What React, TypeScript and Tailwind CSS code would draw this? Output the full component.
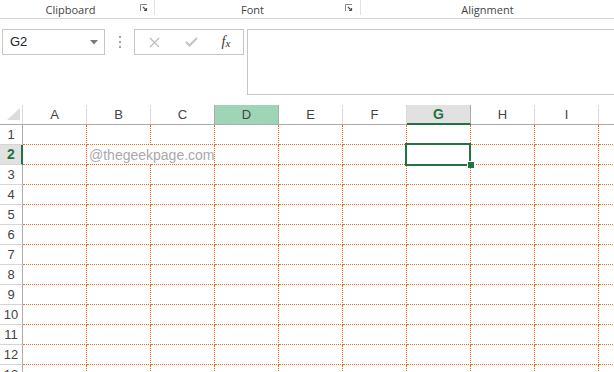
import React from "react";

const cols = ["A", "B", "C", "D", "E", "F", "G", "H", "I", "J"];
const rows = [1, 2, 3, 4, 5, 6, 7, 8, 9, 10, 11, 12, 13];

const Launcher = () => (
  <svg width="8" height="8" viewBox="0 0 8 8" className="shrink-0 mt-[4px]">
    <path d="M0.5 7V0.5H7" fill="none" stroke="#8a8a8a" strokeWidth="1" />
    <path d="M3 3L6.5 6.5M6.5 4V6.5H4" fill="none" stroke="#555" strokeWidth="1.2" />
  </svg>
);

export default function App() {
  return (
    <div className="w-[614px] h-[372px] overflow-hidden bg-white relative font-['Open_Sans',sans-serif]">
      {/* ribbon group labels */}
      <div className="flex h-[19px] border-b border-[#d5d5d5] text-[11px] text-[#444] leading-[20px]">
        <div className="w-[155px] flex items-start border-r border-[#e1e1e1] pr-[6px] h-[15px]">
          <span className="flex-1 text-center pl-[1px]">Clipboard</span>
          <Launcher />
        </div>
        <div className="w-[206px] flex items-start border-r border-[#e1e1e1] pr-[7px] h-[15px]">
          <span className="flex-1 text-center pl-[5px]">Font</span>
          <Launcher />
        </div>
        <div className="flex-1 text-center h-[15px]">Alignment</div>
      </div>

      {/* name box + formula bar */}
      <div className="flex h-[86px] pt-[10px] items-start">
        <div className="ml-[2px] w-[103px] h-[26px] border border-[#c6c6c6] flex items-center pl-[7px] pr-[6px]">
          <span className="flex-1 text-[13px] text-[#222] font-['Liberation_Sans',sans-serif]">G2</span>
          <svg width="8" height="5" viewBox="0 0 8 5">
            <path d="M0 0H8L4 4.5Z" fill="#7a7a7a" />
          </svg>
        </div>
        <div className="w-[29px] h-[26px] flex flex-col items-center justify-center gap-[3px] pl-[1px]">
          <div className="w-[2px] h-[2px] bg-[#a0a0a0]" />
          <div className="w-[2px] h-[2px] bg-[#a0a0a0]" />
          <div className="w-[2px] h-[2px] bg-[#a0a0a0]" />
        </div>
        <div className="w-[110px] h-[26px] border border-[#c6c6c6] flex items-center">
          <div className="w-[38px] flex justify-center">
            <svg width="11" height="11" viewBox="0 0 11 11">
              <path d="M1 1L10 10M10 1L1 10" stroke="#bdbdbd" strokeWidth="1.3" />
            </svg>
          </div>
          <div className="w-[36px] flex justify-center">
            <svg width="13" height="10" viewBox="0 0 13 10">
              <path d="M1 5L4.5 8.5L12 1" fill="none" stroke="#c4c4c4" strokeWidth="2" />
            </svg>
          </div>
          <div className="w-[34px] flex justify-center items-center font-['Liberation_Serif',serif] italic text-[#333] leading-none">
            <span className="text-[14px]">f</span>
            <span className="text-[11px] mt-[3px]">x</span>
          </div>
        </div>
        <div className="ml-[3px] flex-1 h-[66px] border border-r-0 border-[#c6c6c6]" />
      </div>

      {/* sheet grid */}
      <div className="relative font-['Liberation_Sans',sans-serif] text-[13px] text-[#444]">
        <div className="flex h-[20px] border-b border-[#ababab] w-max">
          <div className="w-[23px] h-[19px] border-r border-[#dadada] relative">
            <svg width="13" height="12" viewBox="0 0 13 12" className="absolute left-[7px] top-[3px]">
              <path d="M13 0V12H0Z" fill="#dcdcdc" />
            </svg>
          </div>
          {cols.map((c) =>
            c === "D" ? (
              <div
                key={c}
                className="h-[19px] flex items-center justify-center bg-[#9fd5b7] border-x border-[#ababab] -ml-[1px] w-[65px]"
              >
                {c}
              </div>
            ) : c === "G" ? (
              <div
                key={c}
                className="w-[64px] h-[20px] -mb-[1px] flex items-center justify-center bg-[#e1e1e1] border-r border-[#ababab] border-b-2 border-b-[#217346] font-bold text-[#217346] text-[14px]"
              >
                {c}
              </div>
            ) : (
              <div
                key={c}
                className="w-[64px] h-[19px] flex items-center justify-center border-r border-[#dadada]"
              >
                {c}
              </div>
            )
          )}
        </div>

        {rows.map((r) => (
          <div key={r} className="flex h-[20px] w-max">
            <div
              className={
                r === 2
                  ? "w-[23px] h-[20px] flex items-center justify-center bg-[#e1e1e1] border-r-2 border-[#217346] border-b border-b-[#d5d5d5] font-bold text-[#217346] text-[14px] pl-[1px]"
                  : "w-[23px] h-[20px] flex items-center justify-center border-r border-[#ababab] border-b border-b-[#d5d5d5]"
              }
            >
              {r}
            </div>
            {cols.map((c) => {
              const isMark = r === 2 && c === "B";
              return (
                <div
                  key={c}
                  className={
                    isMark
                      ? "w-[64px] h-[20px] border-b border-dotted border-[#f07020] relative z-10 whitespace-nowrap"
                      : "w-[64px] h-[20px] border-r border-b border-dotted border-[#f07020]"
                  }
                >
                  {isMark && (
                    <span className="absolute left-[2px] top-[1px] text-[14px] text-[#a9a9a9] leading-[18px]">
                      @thegeekpage.com
                    </span>
                  )}
                </div>
              );
            })}
          </div>
        ))}

        {/* active cell G2 */}
        <div className="absolute left-[405px] top-[38px] w-[66px] h-[23px] border-2 border-[#217346]" />
        <div className="absolute left-[467px] top-[56px] w-[8px] h-[7px] bg-white" />
        <div className="absolute left-[468px] top-[57px] w-[6px] h-[6px] bg-[#217346]" />
      </div>
    </div>
  );
}
